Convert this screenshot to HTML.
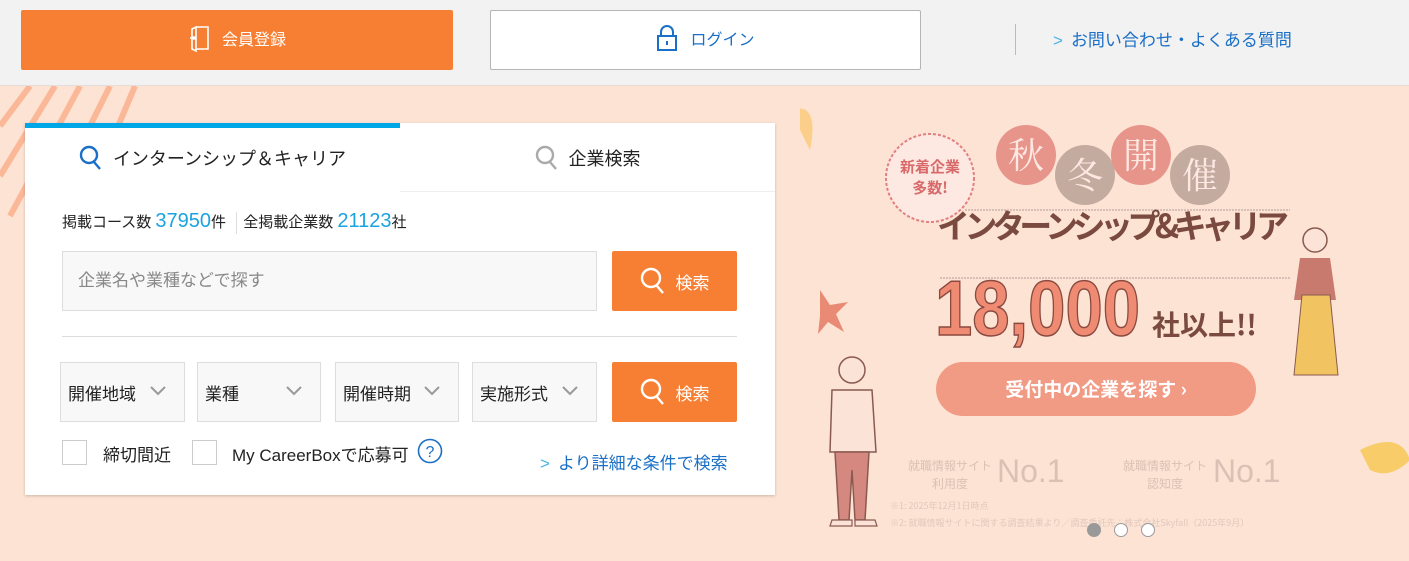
<!DOCTYPE html>
<html><head><meta charset="utf-8"><style>
*{box-sizing:border-box;margin:0;padding:0}
body{width:1409px;height:561px;overflow:hidden;font-family:"Liberation Sans","Noto Sans CJK JP",sans-serif;background:#fde3d3;position:relative}
.hdr{position:absolute;left:0;top:0;width:1409px;height:86px;background:#f2f2f2;border-bottom:1px solid #e6ddd8}
.abs{position:absolute}
.reg{left:21px;top:10px;width:432px;height:60px;background:#f77f33;border-radius:2px;color:#fff;font-size:16px;display:flex;align-items:center;justify-content:center;gap:10px;padding-bottom:4px}
.login{left:490px;top:10px;width:431px;height:60px;background:#fff;border:1px solid #b5b5b5;border-radius:2px;color:#1a6fc7;font-size:16px;display:flex;align-items:center;justify-content:center;gap:12px;padding-bottom:4px}
.card{left:25px;top:123px;width:750px;height:372px;background:#fff;box-shadow:0 1px 3px rgba(0,0,0,.2)}
.tab1{left:0;top:0;width:375px;height:70px;border-top:5px solid #00a7e6;display:flex;align-items:center;justify-content:center;gap:10px;font-size:18px;color:#222;padding-bottom:6px}
.tab2{left:375px;top:0;width:375px;height:69px;border-bottom:1px solid #eee;display:flex;align-items:center;justify-content:center;gap:10px;font-size:18px;color:#222;background:#fff;padding-top:1px}
.sel{height:60px;top:239px;background:#f8f8f8;border:1px solid #ddd;font-size:17px;color:#222;display:flex;align-items:center;padding-left:7px}
.sel svg{position:absolute;right:18px;top:23px}
.btn{left:587px;width:125px;height:60px;background:#f77f33;border-radius:2px;color:#fff;font-size:17px;display:flex;align-items:center;justify-content:center;gap:10px}
.cb{width:25px;height:25px;border:1px solid #ccc;top:317px;background:#fff}
.dot{width:14px;height:14px;border-radius:50%;top:523px;border:1px solid #999;background:#fff}
</style></head><body>
<div class="hdr">
 <div class="abs reg"><svg width="24" height="28" viewBox="0 0 24 28" fill="none" stroke="#fff" stroke-width="1.6"><path d="M8 3h12v22H8M8 3v24l-4-2V5z"/><path d="M2 14l4 0" /><circle cx="6" cy="14" r="1" fill="#fff"/></svg>会員登録</div>
 <div class="abs login"><svg width="22" height="28" viewBox="0 0 22 28" fill="none" stroke="#1a6fc7" stroke-width="2"><path d="M5 12V8a6 6 0 0 1 12 0v4"/><rect x="2" y="12" width="18" height="14"/><path d="M11 17v4"/></svg>ログイン</div>
 <div class="abs" style="left:1015px;top:24px;width:1px;height:31px;background:#bbb"></div>
 <div class="abs" style="left:1053px;top:26px;font-size:17px;color:#1a6fc7"><span style="color:#4ab4e8;margin-right:8px">&gt;</span>お問い合わせ・よくある質問</div>
</div>
<svg class="abs" style="left:0;top:86px" width="200" height="200"><g stroke="#fbb898" stroke-width="6"><path d="M0 40L30 0M0 90L55 0M10 130L80 0M30 160L110 0M55 190L135 0M80 200L160 40M120 200L190 60"/></g></svg>
<div class="abs card">
 <div class="abs tab1"><svg width="24" height="26" viewBox="0 0 24 26" fill="none" stroke="#1a6fc7" stroke-width="2.4"><circle cx="10" cy="10" r="8"/><path d="M15 17l6 7"/></svg>インターンシップ＆キャリア</div>
 <div class="abs tab2"><svg width="24" height="26" viewBox="0 0 24 26" fill="none" stroke="#aaa" stroke-width="2.4"><circle cx="10" cy="10" r="8"/><path d="M15 17l6 7"/></svg>企業検索</div>
 <div class="abs" style="left:37px;top:87px;font-size:15px;color:#222;white-space:nowrap">掲載コース数 <span style="color:#1aa3e0;font-size:20px">37950</span>件 <span style="display:inline-block;width:1px;height:22px;background:#ddd;vertical-align:middle;margin:0 6px"></span>全掲載企業数 <span style="color:#1aa3e0;font-size:20px">21123</span>社</div>
 <div class="abs" style="left:37px;top:128px;width:535px;height:60px;background:#f8f8f8;border:1px solid #ddd;font-size:17px;color:#888;padding:14px 15px">企業名や業種などで探す</div>
 <div class="abs btn" style="top:128px"><svg width="26" height="28" viewBox="0 0 26 28" fill="none" stroke="#fff" stroke-width="2.4"><circle cx="11" cy="11" r="9"/><path d="M17 19l6 7"/></svg>検索</div>
 <div class="abs" style="left:37px;top:213px;width:675px;height:1px;background:#ddd"></div>
 <div class="abs sel" style="left:35px;width:125px">開催地域<svg width="16" height="10"><path d="M1 1l7 7 7-7" fill="none" stroke="#999" stroke-width="2"/></svg></div>
 <div class="abs sel" style="left:172px;width:124px">業種<svg width="16" height="10"><path d="M1 1l7 7 7-7" fill="none" stroke="#999" stroke-width="2"/></svg></div>
 <div class="abs sel" style="left:310px;width:124px">開催時期<svg width="16" height="10"><path d="M1 1l7 7 7-7" fill="none" stroke="#999" stroke-width="2"/></svg></div>
 <div class="abs sel" style="left:447px;width:125px">実施形式<svg width="16" height="10"><path d="M1 1l7 7 7-7" fill="none" stroke="#999" stroke-width="2"/></svg></div>
 <div class="abs btn" style="top:239px"><svg width="26" height="28" viewBox="0 0 26 28" fill="none" stroke="#fff" stroke-width="2.4"><circle cx="11" cy="11" r="9"/><path d="M17 19l6 7"/></svg>検索</div>
 <div class="abs cb" style="left:37px"></div>
 <div class="abs" style="left:78px;top:318px;font-size:17px;color:#222">締切間近</div>
 <div class="abs cb" style="left:167px"></div>
 <div class="abs" style="left:207px;top:318px;font-size:17px;color:#222">My CareerBoxで応募可</div>
 <svg class="abs" style="left:392px;top:315px" width="26" height="26"><circle cx="13" cy="13" r="11.5" fill="none" stroke="#1a6fc7" stroke-width="1.6"/><text x="13" y="19" text-anchor="middle" font-size="16" fill="#1a6fc7" font-family="Liberation Sans">?</text></svg>
 <div class="abs" style="left:515px;top:326px;font-size:17px;color:#1a6fc7"><span style="color:#4ab4e8;margin-right:8px">&gt;</span>より詳細な条件で検索</div>
</div>
<svg class="abs" style="left:800px;top:90px" width="609" height="471">
 <circle cx="130" cy="88" r="44" fill="#fde8e2" stroke="#e27f7f" stroke-width="2" stroke-dasharray="3 2"/>
 <text x="130" y="82" text-anchor="middle" font-size="15" fill="#d86a6a" font-family="Noto Sans CJK JP" font-weight="bold">新着企業</text>
 <text x="130" y="103" text-anchor="middle" font-size="15" fill="#d86a6a" font-family="Noto Sans CJK JP" font-weight="bold">多数!</text>
 <circle cx="226" cy="65" r="30" fill="#e7948a"/><circle cx="285" cy="85" r="30" fill="#c4aba0"/><circle cx="341" cy="65" r="30" fill="#e7948a"/><circle cx="400" cy="85" r="30" fill="#c4aba0"/>
 <text x="226" y="78" text-anchor="middle" font-size="36" fill="#fde8e2" font-family="Noto Serif CJK SC">秋</text>
 <text x="285" y="98" text-anchor="middle" font-size="36" fill="#fde8e2" font-family="Noto Serif CJK SC">冬</text>
 <text x="341" y="78" text-anchor="middle" font-size="36" fill="#fde8e2" font-family="Noto Serif CJK SC">開</text>
 <text x="400" y="98" text-anchor="middle" font-size="36" fill="#fde8e2" font-family="Noto Serif CJK SC">催</text>
 <path d="M165 120H490M140 188H490" stroke="#d8bfb5" stroke-width="2" stroke-dasharray="2 1"/>
 <text x="137" y="148" font-size="33" fill="#7a4a40" font-weight="bold" font-family="Noto Sans CJK JP" textLength="352">インターンシップ&amp;キャリア</text>
 <text x="135" y="245" font-size="78" fill="#ef8b72" stroke="#8a4a40" stroke-width="1.5" font-weight="bold" font-family="Liberation Sans" textLength="205" lengthAdjust="spacingAndGlyphs">18,000</text>
 <text x="352" y="245" font-size="28" fill="#7a4a40" font-family="Noto Sans CJK JP" font-weight="bold">社以上!!</text>
 <rect x="136" y="272" width="320" height="54" rx="27" fill="#f19a84"/>
 <text x="296" y="306" text-anchor="middle" font-size="19" fill="#fff" font-weight="bold" font-family="Noto Sans CJK JP">受付中の企業を探す ›</text>
 <text x="150" y="380" text-anchor="middle" font-size="12" fill="#dcc0b5" font-family="Noto Sans CJK JP">就職情報サイト</text>
 <text x="150" y="398" text-anchor="middle" font-size="12" fill="#dcc0b5" font-family="Noto Sans CJK JP">利用度</text>
 <text x="197" y="392" font-size="32" fill="#dcc0b5" font-family="Liberation Sans">No.1</text>
 <text x="365" y="380" text-anchor="middle" font-size="12" fill="#dcc0b5" font-family="Noto Sans CJK JP">就職情報サイト</text>
 <text x="365" y="398" text-anchor="middle" font-size="12" fill="#dcc0b5" font-family="Noto Sans CJK JP">認知度</text>
 <text x="413" y="392" font-size="32" fill="#dcc0b5" font-family="Liberation Sans">No.1</text>
 <text x="90" y="419" font-size="9" fill="#e0c8bd" font-family="Noto Sans CJK JP">※1: 2025年12月1日時点</text>
 <text x="90" y="436" font-size="9" fill="#e0c8bd" font-family="Noto Sans CJK JP">※2: 就職情報サイトに関する調査結果より／調査委託先：株式会社Skyfall（2025年9月）</text>
 <!-- man -->
 <circle cx="52" cy="280" r="13" fill="#fbe3d8" stroke="#8a5a50" stroke-width="1.5"/>
 <path d="M32 300h40l4 62H30z" fill="#fbe3d8" stroke="#8a5a50" stroke-width="1.5"/>
 <path d="M35 362h34l-4 68h-10l-3-50-3 50h-10z" fill="#d58880" stroke="#8a5a50" stroke-width="1.5"/>
 <path d="M32 430h20v6H30zM55 430h20l2 6H55z" fill="#fbe3d8" stroke="#8a5a50" stroke-width="1.2"/>
 <!-- woman -->
 <circle cx="515" cy="150" r="12" fill="#fbe3d8" stroke="#8a5a50" stroke-width="1.5"/>
 <path d="M500 168h30l6 42h-42z" fill="#c97a6f"/>
 <path d="M502 205h28l8 80h-44z" fill="#f2c361" stroke="#8a5a50" stroke-width="1"/>
 <path d="M20 200l10 15 18-3-12 12 8 18-16-10-10 12 2-18z" fill="#e88a74"/>
 <path d="M560 360q40-20 50 10q-20 20-40 10z" fill="#f8cc68"/>
 <path d="M-10 20q30-10 20 40z" fill="#fbcf8a"/>
</svg>
<div class="abs dot" style="left:1087px;background:#999"></div>
<div class="abs dot" style="left:1114px"></div>
<div class="abs dot" style="left:1141px"></div>
</body></html>
